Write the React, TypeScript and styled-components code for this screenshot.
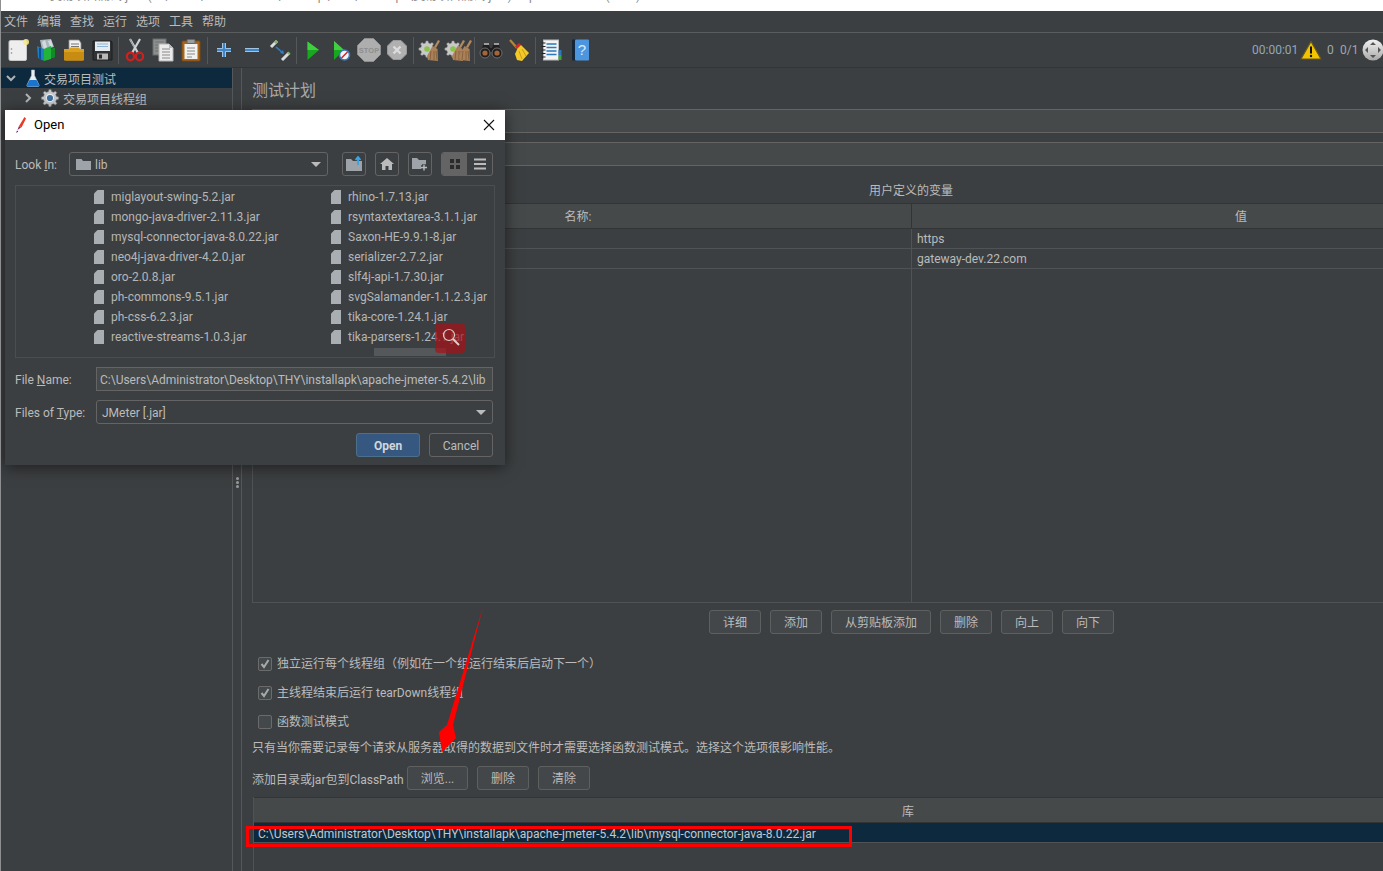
import React from "react";
import styled, { createGlobalStyle } from "styled-components";

const Global = createGlobalStyle`
  html, body { margin: 0; padding: 0; width: 100%; height: 100%; overflow: hidden; background: #3c3f41; }
  #root { height: 100%; }
  * { box-sizing: border-box; }
`;

const FONT = `Roboto, "Noto Sans CJK SC", sans-serif`;

const Page = styled.div`
  position: relative;
  width: 1383px;
  height: 871px;
  overflow: hidden;
  background: #3c3f41;
  color: #bbbbbb;
  font: 12px/16px ${FONT};
  display: flex;
  flex-direction: column;
  border-left: 1px solid #8d8f90;
`;

const TitleStrip = styled.div`
  flex: 0 0 11px;
  height: 11px;
  margin-left: -1px;
  padding-left: 50px;
  background: #ffffff;
  color: #8a8a8a;
  overflow: hidden;
  white-space: nowrap;
  font-size: 12px;
  line-height: 1px;
`;

const TitleClip = styled.div`
  margin-top: -4px;
`;

const MenuBar = styled.div`
  flex: 0 0 22px;
  display: flex;
  align-items: center;
  gap: 9px;
  padding-left: 3px;
  border-bottom: 1px solid #5a5c5d;
`;

const MenuItem = styled.span`
  width: 24px;
  white-space: nowrap;
  line-height: 20px;
`;

const Toolbar = styled.div`
  flex: 0 0 35px;
  display: flex;
  align-items: center;
  padding-left: 3px;
  border-bottom: 1px solid #323436;
`;

const ToolButton = styled.div`
  flex: 0 0 28px;
  height: 28px;
  display: flex;
  align-items: center;
  justify-content: center;
`;

const ToolSep = styled.div`
  flex: 0 0 5px;
  height: 27px;
  display: flex;
  justify-content: center;
  &::before { content: ""; width: 1px; background: #55585a; }
`;

const Status = styled.div`
  margin-left: auto;
  margin-right: -1px;
  display: flex;
  align-items: center;
  color: #a0a8ae;
`;

const Timer = styled.span`
  color: #8fa7bd;
  width: 48px;
`;

const Count = styled.span<{ $w: number; $ml: number }>`
  width: ${(p) => p.$w}px;
  margin-left: ${(p) => p.$ml}px;
`;

const Workspace = styled.div`
  flex: 1;
  display: flex;
  min-height: 0;
`;

const TreePane = styled.div`
  flex: 0 0 231px;
  display: flex;
  flex-direction: column;
`;

const TreeRow = styled.div<{ $selected?: boolean; $indent: number }>`
  height: 20px;
  display: flex;
  align-items: center;
  padding-left: ${(p) => p.$indent}px;
  background: ${(p) => (p.$selected ? "#0d293e" : "transparent")};
  white-space: nowrap;
`;

const TreeLabel = styled.span<{ $ml: number }>`
  margin-left: ${(p) => p.$ml}px;
  padding-top: 3px;
`;

const TreeGap = styled.span<{ $w: number }>`
  width: ${(p) => p.$w}px;
  flex: none;
`;

const Splitter = styled.div`
  flex: 0 0 10px;
  display: flex;
  flex-direction: column;
  align-items: center;
  gap: 1px;
  padding-top: 409px;
  border-left: 1px solid #55585a;
  border-right: 1px solid #55585a;
`;

const GripDot = styled.i`
  width: 3px;
  height: 3px;
  border-radius: 50%;
  background: #9a9a9a;
`;

const MainPane = styled.div`
  flex: 0 0 1328px;
  padding-left: 10px;
  display: flex;
  flex-direction: column;
`;

const Heading = styled.div`
  height: 41px;
  padding-top: 4px;
  display: flex;
  align-items: center;
  font-size: 16px;
  color: #a9a9a9;
`;

const Field = styled.div`
  height: 24px;
  margin-bottom: 9px;
  background: #45494a;
  border-top: 1px solid #646464;
  border-bottom: 1px solid #646464;
`;

const Caption = styled.div`
  height: 28px;
  padding-top: 6px;
  line-height: 20px;
  text-align: center;
`;

const VarTable = styled.div`
  height: 400px;
  border-left: 1px solid #505355;
  border-bottom: 1px solid #505355;
  border-top: 1px solid #323436;
  background: linear-gradient(#505355, #505355) 658px 0 / 1px 100% no-repeat;
`;

const HeaderRow = styled.div`
  height: 25px;
  display: grid;
  grid-template-columns: 658px 1fr;
  background: #45494a;
  border-bottom: 1px solid #323436;
`;

const HeaderCell = styled.div<{ $div?: boolean }>`
  display: flex;
  align-items: center;
  justify-content: center;
  padding: 2px ${(p) => (p.$div ? 0 : 8)}px 0 0;
  border-left: ${(p) => (p.$div ? "1px solid #323436" : "none")};
`;

const DataRow = styled.div`
  height: 20px;
  display: grid;
  grid-template-columns: 658px 1fr;
  border-bottom: 1px solid #505355;
`;

const DataCell = styled.div`
  padding: 1px 0 0 6px;
  line-height: 18px;
  white-space: nowrap;
`;

const TableButtons = styled.div`
  display: flex;
  justify-content: center;
  gap: 9px;
  margin-top: 7px;
  height: 39px;
  padding-left: 1px;
`;

const Btn = styled.div<{ $w: number }>`
  width: ${(p) => p.$w}px;
  height: 24px;
  flex: none;
  padding-top: 2px;
  display: flex;
  align-items: center;
  justify-content: center;
  background: #43474a;
  border: 1px solid #5e6060;
  border-radius: 3px;
  white-space: nowrap;
`;

const CheckRow = styled.div`
  height: 29px;
  display: flex;
  align-items: center;
  gap: 5px;
  padding-left: 6px;
`;

const Check = styled.span`
  width: 14px;
  height: 14px;
  flex: none;
  display: flex;
  align-items: center;
  justify-content: center;
  background: #43494a;
  border: 1px solid #6b6b6b;
  border-radius: 2px;
`;

const Note = styled.div`
  height: 24px;
  line-height: 24px;
  white-space: nowrap;
`;

const PathBar = styled.div`
  display: flex;
  align-items: center;
  height: 24px;
  margin-top: 6px;
`;

const PathLabel = styled.span`
  width: 155px;
  padding-top: 4px;
  white-space: nowrap;
`;

const PathButtons = styled.div`
  display: flex;
  gap: 9px;
`;

const LibTable = styled.div`
  flex: 1;
  margin: 7px 0 0 1px;
  border-left: 1px solid #505355;
  display: flex;
  flex-direction: column;
`;

const LibHeader = styled.div`
  height: 26px;
  padding: 4px 8px 0 0;
  background: #45494a;
  border-top: 1px solid #323436;
  border-bottom: 1px solid #323436;
  display: flex;
  align-items: center;
  justify-content: center;
`;

const LibRow = styled.div`
  height: 20px;
  padding: 2px 0 0 4px;
  line-height: 18px;
  background: #0d293e;
  border-bottom: 1px solid #505355;
  color: #c3c8cc;
  white-space: nowrap;
`;

const RedBox = styled.div`
  position: absolute;
  left: 245px;
  top: 826px;
  width: 606px;
  height: 21px;
  border: 3px solid #ff0000;
  pointer-events: none;
`;

const ArrowLayer = styled.svg`
  position: absolute;
  left: 430px;
  top: 600px;
  pointer-events: none;
`;

/* ---------- dialog ---------- */

const Dialog = styled.div`
  position: absolute;
  left: 4px;
  top: 110px;
  width: 500px;
  height: 355px;
  background: #3c3f41;
  box-shadow: 0 2px 14px rgba(0, 0, 0, 0.55);
  display: flex;
  flex-direction: column;
`;

const DialogTitle = styled.div`
  flex: 0 0 30px;
  background: #ffffff;
  color: #000000;
  font-size: 13px;
  display: flex;
  align-items: center;
  padding: 0 10px 1px 10px;
`;

const TitleText = styled.span`
  margin-left: 7px;
  flex: 1;
`;

const DialogBody = styled.div`
  flex: 1;
  padding: 12px 12px 0 10px;
  display: flex;
  flex-direction: column;
`;

const FormRow = styled.div<{ $mt?: number }>`
  display: flex;
  align-items: center;
  height: 24px;
  margin-top: ${(p) => p.$mt ?? 0}px;
`;

const LookLabel = styled.span`
  width: 54px;
  flex: none;
  padding-top: 1px;
`;

const FormLabel = styled.span`
  width: 81px;
  flex: none;
  padding-top: 1px;
  white-space: nowrap;
`;

const Combo = styled.div<{ $w?: number; $pl?: number }>`
  height: 24px;
  flex: ${(p) => (p.$w ? `0 0 ${p.$w}px` : "1")};
  display: flex;
  align-items: center;
  padding: 0 6px 0 ${(p) => p.$pl ?? 6}px;
  background: #3c3f41;
  border: 1px solid #646464;
  border-radius: 3px;
  white-space: nowrap;
`;

const ComboText = styled.span<{ $ml?: number }>`
  flex: 1;
  margin-left: ${(p) => p.$ml ?? 0}px;
  padding-top: 1px;
`;

const TextInput = styled.div`
  flex: 1;
  height: 24px;
  padding: 1px 3px 0;
  line-height: 22px;
  background: #45494a;
  border: 1px solid #646464;
  white-space: nowrap;
  overflow: hidden;
`;

const ComboArrow = styled.i`
  width: 0;
  height: 0;
  border-left: 5px solid transparent;
  border-right: 5px solid transparent;
  border-top: 5px solid #bbbbbb;
`;

const IconBtn = styled.div<{ $ml?: number }>`
  flex: 0 0 24px;
  height: 24px;
  margin-left: ${(p) => p.$ml ?? 9}px;
  display: flex;
  align-items: center;
  justify-content: center;
  border: 1px solid #646464;
  border-radius: 3px;
`;

const ViewToggle = styled.div`
  flex: 0 0 52px;
  height: 24px;
  margin-left: 9px;
  display: flex;
  border: 1px solid #646464;
  border-radius: 3px;
  overflow: hidden;
`;

const ViewOption = styled.div<{ $active?: boolean }>`
  flex: 1;
  display: flex;
  align-items: center;
  justify-content: center;
  background: ${(p) => (p.$active ? "#646464" : "transparent")};
`;

const FileList = styled.div`
  position: relative;
  height: 173px;
  width: 480px;
  margin-top: 9px;
  padding: 1px 0 0 78px;
  border: 1px solid #4b4e50;
  display: grid;
  grid-template-columns: 237px 1fr;
  grid-auto-flow: column;
  grid-template-rows: repeat(8, 20px);
`;

const FileItem = styled.div`
  display: flex;
  align-items: center;
  gap: 7px;
  white-space: nowrap;
  color: #b4b6b8;
`;

const Thumb = styled.div`
  position: absolute;
  left: 358px;
  top: 162px;
  width: 72px;
  height: 8px;
  background: #55585a;
`;

const Magnifier = styled.div`
  position: absolute;
  left: 419px;
  top: 137px;
  width: 30px;
  height: 30px;
  border-radius: 4px;
  background: rgba(170, 15, 20, 0.68);
  display: flex;
  align-items: center;
  justify-content: center;
`;

const Footer = styled.div`
  display: flex;
  justify-content: flex-end;
  gap: 9px;
  margin-top: 9px;
`;

const DlgBtn = styled.div<{ $primary?: boolean }>`
  width: 64px;
  height: 24px;
  padding-top: 1px;
  display: flex;
  align-items: center;
  justify-content: center;
  border-radius: 3px;
  background: ${(p) => (p.$primary ? "#365880" : "#3c3f41")};
  border: 1px solid ${(p) => (p.$primary ? "#4c708c" : "#646464")};
  font-weight: ${(p) => (p.$primary ? 700 : 400)};
  color: ${(p) => (p.$primary ? "#cfd6dc" : "#bbbbbb")};
`;

const Mn = styled.span`
  text-decoration: underline;
`;

/* ---------- icons ---------- */

type SvgProps = React.SVGProps<SVGSVGElement>;
const S = ({ children, w = 24, h = 24, ...rest }: SvgProps & { w?: number; h?: number }) => (
  <svg width={w} height={h} viewBox={`0 0 ${w} ${h}`} style={{ flex: "none" }} {...rest}>
    {children}
  </svg>
);

const NewIcon = () => (
  <S>
    <rect x="3" y="2.5" width="17.5" height="20" rx="1.5" fill="#eeeeee" stroke="#c8c8c8" />
    <circle cx="20" cy="4" r="3" fill="#f8e88a" opacity="0.9" />
    <circle cx="5.5" cy="11" r="0.8" fill="#888" />
    <circle cx="5.5" cy="15" r="0.8" fill="#888" />
  </S>
);
const TemplateIcon = () => (
  <S>
    <path d="M6 2l11-1 3 8-12 3z" fill="#a9b6bd" />
    <path d="M8 4l3-2 2 7-3 2zM14 3l3-1 2 6-3 1z" fill="#d4dadd" />
    <path d="M3 8l7 3v12l-6-3z" fill="#1d7fc4" />
    <path d="M5 9.5l2 .8v11l-2-1z" fill="#0b4f8c" />
    <path d="M10 11l7-3v3l4-1v9l-4 1v1l-7 2z" fill="#21b33a" />
    <path d="M17 11l4-1v9l-4 1z" fill="#128a26" />
  </S>
);
const OpenIcon = () => (
  <S>
    <path d="M7 2h10l2 3v9H7z" fill="#f1f1f1" stroke="#8e8e8e" strokeWidth="0.8" />
    <path d="M9 6h8M9 8.5h8" stroke="#777" strokeWidth="1" />
    <path d="M2 11h5l1-1.5h9l1 1.5h4v10a1.5 1.5 0 0 1-1.5 1.5h-17A1.5 1.5 0 0 1 2 21z" fill="#dca21f" />
    <path d="M2 14h20v7a1.5 1.5 0 0 1-1.5 1.5h-17A1.5 1.5 0 0 1 2 21z" fill="#c98c13" />
  </S>
);
const SaveIcon = () => (
  <S>
    <path d="M3 3h18l1 1v18H3z" fill="#303234" stroke="#1c1c1c" />
    <rect x="5" y="3.5" width="15" height="9.5" fill="#e4ecf2" />
    <path d="M7 6h11M7 8.5h11" stroke="#8fb5d6" strokeWidth="1.2" />
    <rect x="7" y="15.5" width="11" height="6" fill="#b9b9b9" />
    <rect x="9" y="16.5" width="3" height="4" fill="#2b2b2b" />
  </S>
);
const CutIcon = () => (
  <S>
    <path d="M7 1l8 14M17 1L9 15" stroke="#d0d3d6" strokeWidth="2.2" />
    <path d="M7 1l4 8" stroke="#8e9498" strokeWidth="1" />
    <ellipse cx="7.5" cy="18.5" rx="3.6" ry="3.8" fill="none" stroke="#d11f1f" strokeWidth="2.2" />
    <ellipse cx="16.5" cy="18.5" rx="3.6" ry="3.8" fill="none" stroke="#d11f1f" strokeWidth="2.2" />
  </S>
);
const CopyIcon = () => (
  <S>
    <rect x="2" y="1" width="13" height="16" fill="#8c8f90" stroke="#6b6d6e" />
    <path d="M4 4h9M4 7h9M4 10h9M4 13h9" stroke="#707375" />
    <path d="M8 6h10l4 4v13H8z" fill="#ececec" stroke="#b5b5b5" />
    <path d="M18 6v4h4z" fill="#bbb" />
    <path d="M11 11h8M11 14h8M11 17h8M11 20h8" stroke="#8a8a8a" />
  </S>
);
const PasteIcon = () => (
  <S>
    <rect x="3" y="3" width="18" height="20" rx="1" fill="#a9661a" stroke="#7c4a10" />
    <rect x="5.5" y="6" width="13" height="15" fill="#f1f1f1" />
    <rect x="8" y="1.5" width="8" height="4" rx="1" fill="#9a9da0" stroke="#666" />
    <path d="M8 10h8M8 13h8M8 16h8M8 19h5" stroke="#8a8a8a" />
  </S>
);
const PlusIcon = () => (
  <S>
    <path d="M12 5v14M5 12h14" stroke="#bcd4ea" strokeWidth="4" />
    <path d="M12 5v14M5 12h14" stroke="#3f86c9" strokeWidth="2.4" />
  </S>
);
const MinusIcon = () => (
  <S>
    <path d="M5 12h14" stroke="#bcd4ea" strokeWidth="4" />
    <path d="M5 12h14" stroke="#3f86c9" strokeWidth="2.4" />
  </S>
);
const ToggleIcon = () => (
  <S>
    <path d="M3 9l6-6" stroke="#d8dcdc" strokeWidth="3" />
    <path d="M7 5l2-2" stroke="#7fb56a" strokeWidth="3" />
    <path d="M21 15l-7 7" stroke="#d8dcdc" strokeWidth="3" />
    <path d="M20 16l1.5-1.5" stroke="#7fb56a" strokeWidth="3" />
    <path d="M8 9l7 6" stroke="#2f7fc4" strokeWidth="1.6" />
    <path d="M16 16l-1-4-3 3z" fill="#2f7fc4" />
  </S>
);
const RunIcon = () => (
  <S>
    <path d="M6.5 3.5L18 12 6.5 22z" fill="#17a81f" />
    <path d="M6.5 3.5L18 12H6.5z" fill="#3fcf3f" />
  </S>
);
const RunNoPauseIcon = () => (
  <S>
    <path d="M5 3l10 9-10 10z" fill="#17a81f" />
    <path d="M5 3l10 9H5z" fill="#3fcf3f" />
    <circle cx="15.5" cy="17" r="5" fill="#f2f5f8" stroke="#3b77b5" strokeWidth="1.6" />
    <path d="M12.5 20l6-6" stroke="#d21f1f" strokeWidth="1.4" />
  </S>
);
const StopIcon = () => (
  <S>
    <path d="M7.5 0.5h9l7 7v9l-7 7h-9l-7-7v-9z" fill="#aeaeae" stroke="#8e8e8e" />
    <text x="12" y="14.5" textAnchor="middle" fontFamily="Liberation Sans, sans-serif" fontSize="7.5" fontWeight="700" fill="#8f8f8f">
      STOP
    </text>
  </S>
);
const ShutIcon = () => (
  <S>
    <path d="M8 2.5h8l5.5 5.5v8L16 21.5H8L2.5 16V8z" fill="#b0b0b0" stroke="#999" />
    <path d="M8.5 8.5l7 7M15.5 8.5l-7 7" stroke="#dcdcdc" strokeWidth="2.4" />
  </S>
);
const Gear = ({ x, y }: { x: number; y: number }) => (
  <g transform={`translate(${x} ${y})`}>
    <path d="M7 0h2l.5 2 1.8.7 1.8-1.1 1.4 1.4-1.1 1.8.7 1.8 2 .5v2l-2 .5-.7 1.8 1.1 1.8-1.4 1.4-1.8-1.1-1.8.7-.5 2H7l-.5-2-1.8-.7-1.8 1.1-1.4-1.4 1.1-1.8-.7-1.8-2-.5v-2l2-.5.7-1.8L1.6 3 3 1.6l1.8 1.1 1.8-.7z" fill="#c8c8c8" stroke="#8c8c8c" strokeWidth="0.5" />
    <circle cx="8" cy="8" r="2.8" fill="#8bc34a" />
  </g>
);
const Broomlet = ({ dx = 0 }: { dx?: number }) => (
  <g transform={`translate(${dx} 0)`}>
    <path d="M20 2l2 1-4 7-2-1z" fill="#b08a63" />
    <path d="M14.5 8l5 3 .5 12-10-1-1-4z" fill="#ab8159" />
    <path d="M13 13l-1 9M16 13l0 9M18 13l1 9" stroke="#7d5b39" strokeWidth="0.8" />
  </g>
);
const ClearIcon = () => (
  <S>
    <Gear x={1} y={3} />
    <Broomlet />
  </S>
);
const ClearAllIcon = () => (
  <S w={28} h={24}>
    <Gear x={1} y={3} />
    <Broomlet dx={-1} />
    <Broomlet dx={6} />
  </S>
);
const BinocularsIcon = () => (
  <S>
    <path d="M4 7h6l1 3h2l1-3h6l3 10H14l-1-3h-2l-1 3H1z" fill="#1f1f1f" />
    <circle cx="6" cy="15" r="5" fill="#1f1f1f" stroke="#6d6d6d" />
    <circle cx="18" cy="15" r="5" fill="#1f1f1f" stroke="#6d6d6d" />
    <circle cx="6" cy="15" r="2.6" fill="#a5643a" />
    <circle cx="18" cy="15" r="2.6" fill="#a5643a" />
    <path d="M5 6h5M15 6h5" stroke="#bdbdbd" strokeWidth="1.6" />
  </S>
);
const BroomIcon = () => (
  <S>
    <path d="M3 2l7 8" stroke="#b98434" strokeWidth="2.2" />
    <path d="M8 8.5l4-3.5 2 2-3.5 4z" fill="#d52828" />
    <path d="M10.5 10.5L14 7l8 8-7 8-5-1-2-6z" fill="#f3c927" />
    <path d="M12 13l3 8M15 11l4 7" stroke="#c9991a" />
  </S>
);
const LogIcon = () => (
  <S>
    <rect x="3.5" y="2" width="15" height="20" fill="#f3f3f3" stroke="#b9b9b9" />
    <path d="M6.5 6h10M6.5 9.5h10M6.5 13h10M6.5 16.5h10" stroke="#2a78bf" strokeWidth="1.4" />
    <path d="M1.5 5h4M1.5 8.5h4M1.5 12h4M1.5 15.5h4M1.5 19h4" stroke="#222" strokeWidth="1.2" />
    <rect x="18.5" y="12" width="3" height="5" fill="#2a78bf" />
    <rect x="18.5" y="17" width="3" height="5" fill="#3ca33c" />
  </S>
);
const HelpIcon = () => (
  <S>
    <rect x="4" y="1.5" width="5" height="21" rx="1" fill="#14273a" />
    <rect x="7" y="1.5" width="14" height="21" rx="1" fill="#4c96e0" />
    <text x="14" y="17" textAnchor="middle" fontFamily="Liberation Sans, sans-serif" fontSize="15" fill="#dbeaf8">
      ?
    </text>
  </S>
);
const WarnIcon = () => (
  <S w={22} h={20}>
    <path d="M11 1.5L21 19H1z" fill="#f5c400" stroke="#6a5a18" strokeWidth="1.2" strokeLinejoin="round" />
    <path d="M11 6.5v7" stroke="#111" strokeWidth="2" />
    <circle cx="11" cy="16" r="1.2" fill="#111" />
  </S>
);
const LoggerIcon = () => (
  <S w={22} h={22}>
    <defs>
      <linearGradient id="lg" x1="0" y1="0" x2="0" y2="1">
        <stop offset="0" stopColor="#f1f1f1" />
        <stop offset="1" stopColor="#a9a9a9" />
      </linearGradient>
    </defs>
    <circle cx="11" cy="11" r="10.5" fill="url(#lg)" />
    <g fill="#555">
      <path d="M11 3l3 3H8zM11 19l3-3H8zM3 11l3-3v6zM19 11l-3-3v6z" />
    </g>
  </S>
);
const ChevDown = () => (
  <S w={14} h={14}>
    <path d="M3 5l4 4 4-4" fill="none" stroke="#b0b4b6" strokeWidth="2" />
  </S>
);
const ChevRight = () => (
  <S w={14} h={14}>
    <path d="M5 3l4 4-4 4" fill="none" stroke="#b0b4b6" strokeWidth="2" />
  </S>
);
const Flask = () => (
  <S w={14} h={18}>
    <path d="M5.5 1h3v5.5l4.5 9.5a1 1 0 0 1-1 1.5H2a1 1 0 0 1-1-1.5l4.5-9.5z" fill="#e8eef2" stroke="#b8c2c8" strokeWidth="0.6" />
    <path d="M3.5 11h7l2.7 5.2a1 1 0 0 1-1 1.3H1.8a1 1 0 0 1-1-1.3z" fill="#1b74d0" />
  </S>
);
const TreeGear = () => (
  <S w={20} h={20}>
    <g transform="translate(1.5 1.5) scale(1.06)">
      <path d="M7 0h2l.5 2 1.8.7 1.8-1.1 1.4 1.4-1.1 1.8.7 1.8 2 .5v2l-2 .5-.7 1.8 1.1 1.8-1.4 1.4-1.8-1.1-1.8.7-.5 2H7l-.5-2-1.8-.7-1.8 1.1-1.4-1.4 1.1-1.8-.7-1.8-2-.5v-2l2-.5.7-1.8L1.6 3 3 1.6l1.8 1.1 1.8-.7z" fill="#c6cacc" stroke="#76797b" strokeWidth="0.5" />
      <circle cx="8" cy="8" r="3.4" fill="#3f6f9e" stroke="#e8eef2" />
    </g>
  </S>
);
const Pencil = () => (
  <S w={12} h={18}>
    <path d="M9.5 1L4 10l2.5 1.5L11 2.5z" fill="#ea3a24" />
    <path d="M4 10l-1.5 4 3.5-2.5z" fill="#8c1c66" />
    <path d="M2 14.5l-.8 2.5 2-1.5z" fill="#3c1a70" />
  </S>
);
const CloseX = () => (
  <S w={12} h={12}>
    <path d="M1 1l10 10M11 1L1 11" stroke="#111" strokeWidth="1.1" />
  </S>
);
const Folder = () => (
  <S w={15} h={12}>
    <path d="M0 1h5.5l1.5 2h8v9H0z" fill="#9da3a8" />
  </S>
);
const FolderUp = () => (
  <S w={18} h={16}>
    <path d="M1 3h5l2 2h9v10H1z" fill="#9da3a8" />
    <path d="M13 9V2M10.5 4L13 1l2.5 3" fill="none" stroke="#3ba5e8" strokeWidth="1.8" />
  </S>
);
const Home = () => (
  <S w={14} h={12}>
    <path d="M7 0L0 6h2v6h3.5V8h3v4H12V6h2z" fill="#bbbbbb" />
  </S>
);
const FolderNew = () => (
  <S w={16} h={14}>
    <path d="M0 1h5l2 2h7v9H0z" fill="#9da3a8" />
    <path d="M12 7v6M9 10h6" stroke="#3c3f41" strokeWidth="3.4" />
    <path d="M12 7.5v6M9 10.5h6" stroke="#bbbbbb" strokeWidth="1.4" />
  </S>
);
const GridGlyph = () => (
  <S w={12} h={12}>
    <path d="M1 1h4v4H1zM7 1h4v4H7zM1 7h4v4H1zM7 7h4v4H7z" fill="#2b2b2b" />
  </S>
);
const ListGlyph = () => (
  <S w={12} h={12}>
    <path d="M0 1.5h12M0 6h12M0 10.5h12" stroke="#bbbbbb" strokeWidth="1.8" />
  </S>
);
const FileGlyph = () => (
  <S w={10} h={14}>
    <path d="M3.5 0H10v14H0V3.5z" fill="#a9aeb2" />
  </S>
);
const Tick = () => (
  <S w={12} h={12}>
    <path d="M2.5 6l2.5 3 4.5-7" fill="none" stroke="#a9a9a9" strokeWidth="2" />
  </S>
);
const Lens = () => (
  <S w={20} h={20}>
    <circle cx="9" cy="7" r="5.5" fill="none" stroke="#d8cfcf" strokeWidth="1.2" />
    <path d="M13 11l6 6" stroke="#d8cfcf" strokeWidth="2" />
  </S>
);

/* ---------- data ---------- */

const MENUS = ["文件", "编辑", "查找", "运行", "选项", "工具", "帮助"];

const TOOL_GROUPS: React.FC[][] = [
  [NewIcon, TemplateIcon, OpenIcon, SaveIcon],
  [CutIcon, CopyIcon, PasteIcon],
  [PlusIcon, MinusIcon, ToggleIcon],
  [RunIcon, RunNoPauseIcon, StopIcon, ShutIcon],
  [ClearIcon, ClearAllIcon],
  [BinocularsIcon, BroomIcon],
  [LogIcon, HelpIcon],
];

const FILES = [
  "miglayout-swing-5.2.jar",
  "mongo-java-driver-2.11.3.jar",
  "mysql-connector-java-8.0.22.jar",
  "neo4j-java-driver-4.2.0.jar",
  "oro-2.0.8.jar",
  "ph-commons-9.5.1.jar",
  "ph-css-6.2.3.jar",
  "reactive-streams-1.0.3.jar",
  "rhino-1.7.13.jar",
  "rsyntaxtextarea-3.1.1.jar",
  "Saxon-HE-9.9.1-8.jar",
  "serializer-2.7.2.jar",
  "slf4j-api-1.7.30.jar",
  "svgSalamander-1.1.2.3.jar",
  "tika-core-1.24.1.jar",
  "tika-parsers-1.24.1.jar",
];

const TABLE_BTNS: [string, number][] = [
  ["详细", 52],
  ["添加", 52],
  ["从剪贴板添加", 100],
  ["删除", 52],
  ["向上", 52],
  ["向下", 52],
];

const CHECKS: [string, boolean][] = [
  ["独立运行每个线程组（例如在一个组运行结束后启动下一个）", true],
  ["主线程结束后运行 tearDown线程组", true],
  ["函数测试模式", false],
];

export default function App() {
  return (
    <Page>
      <Global />
      <TitleStrip>
        <TitleClip>交易项目测试.jmx (C:\Users\Administrator\Desktop\THY\installapk\交易项目测试.jmx) - Apache JMeter (5.4.2)</TitleClip>
      </TitleStrip>
      <MenuBar>
        {MENUS.map((m) => (
          <MenuItem key={m}>{m}</MenuItem>
        ))}
      </MenuBar>
      <Toolbar>
        {TOOL_GROUPS.map((group, i) => (
          <React.Fragment key={i}>
            {i > 0 && <ToolSep />}
            {group.map((Icon, j) => (
              <ToolButton key={j}>
                <Icon />
              </ToolButton>
            ))}
          </React.Fragment>
        ))}
        <Status>
          <Timer>00:00:01</Timer>
          <WarnIcon />
          <Count $w={6} $ml={5}>0</Count>
          <Count $w={22} $ml={7}>0/1</Count>
          <LoggerIcon />
        </Status>
      </Toolbar>
      <Workspace>
        <TreePane>
          <TreeRow $selected $indent={3}>
            <ChevDown />
            <TreeGap $w={8} />
            <Flask />
            <TreeLabel $ml={4}>交易项目测试</TreeLabel>
          </TreeRow>
          <TreeRow $indent={20}>
            <ChevRight />
            <TreeGap $w={5} />
            <TreeGear />
            <TreeLabel $ml={3}>交易项目线程组</TreeLabel>
          </TreeRow>
        </TreePane>
        <Splitter>
          <GripDot />
          <GripDot />
          <GripDot />
        </Splitter>
        <MainPane>
          <Heading>测试计划</Heading>
          <Field />
          <Field />
          <Caption>用户定义的变量</Caption>
          <VarTable>
            <HeaderRow>
              <HeaderCell>名称:</HeaderCell>
              <HeaderCell $div>值</HeaderCell>
            </HeaderRow>
            <DataRow>
              <div />
              <DataCell>https</DataCell>
            </DataRow>
            <DataRow>
              <div />
              <DataCell>gateway-dev.22.com</DataCell>
            </DataRow>
          </VarTable>
          <TableButtons>
            {TABLE_BTNS.map(([label, w]) => (
              <Btn key={label} $w={w}>
                {label}
              </Btn>
            ))}
          </TableButtons>
          {CHECKS.map(([label, checked]) => (
            <CheckRow key={label}>
              <Check>{checked && <Tick />}</Check>
              {label}
            </CheckRow>
          ))}
          <Note>只有当你需要记录每个请求从服务器取得的数据到文件时才需要选择函数测试模式。选择这个选项很影响性能。</Note>
          <PathBar>
            <PathLabel>添加目录或jar包到ClassPath</PathLabel>
            <PathButtons>
              <Btn $w={61}>浏览...</Btn>
              <Btn $w={52}>删除</Btn>
              <Btn $w={52}>清除</Btn>
            </PathButtons>
          </PathBar>
          <LibTable>
            <LibHeader>库</LibHeader>
            <LibRow>C:\Users\Administrator\Desktop\THY\installapk\apache-jmeter-5.4.2\lib\mysql-connector-java-8.0.22.jar</LibRow>
          </LibTable>
        </MainPane>
      </Workspace>

      <RedBox />
      <ArrowLayer width="60" height="160" viewBox="430 600 60 160">
        <path d="M482 607L452 725 455 738 441 752 438 732 446 725z" fill="#ff0000" />
      </ArrowLayer>

      <Dialog>
        <DialogTitle>
          <Pencil />
          <TitleText>Open</TitleText>
          <CloseX />
        </DialogTitle>
        <DialogBody>
          <FormRow>
            <LookLabel>
              Look <Mn>I</Mn>n:
            </LookLabel>
            <Combo $w={259}>
              <Folder />
              <ComboText $ml={4}>lib</ComboText>
              <ComboArrow />
            </Combo>
            <IconBtn $ml={14}>
              <FolderUp />
            </IconBtn>
            <IconBtn>
              <Home />
            </IconBtn>
            <IconBtn>
              <FolderNew />
            </IconBtn>
            <ViewToggle>
              <ViewOption $active>
                <GridGlyph />
              </ViewOption>
              <ViewOption>
                <ListGlyph />
              </ViewOption>
            </ViewToggle>
          </FormRow>
          <FileList>
            {FILES.map((f) => (
              <FileItem key={f}>
                <FileGlyph />
                {f}
              </FileItem>
            ))}
            <Thumb />
            <Magnifier>
              <Lens />
            </Magnifier>
          </FileList>
          <FormRow $mt={9}>
            <FormLabel>
              File <Mn>N</Mn>ame:
            </FormLabel>
            <TextInput>C:\Users\Administrator\Desktop\THY\installapk\apache-jmeter-5.4.2\lib</TextInput>
          </FormRow>
          <FormRow $mt={9}>
            <FormLabel>
              Files of <Mn>T</Mn>ype:
            </FormLabel>
            <Combo $pl={5}>
              <ComboText>JMeter [.jar]</ComboText>
              <ComboArrow />
            </Combo>
          </FormRow>
          <Footer>
            <DlgBtn $primary>Open</DlgBtn>
            <DlgBtn>Cancel</DlgBtn>
          </Footer>
        </DialogBody>
      </Dialog>
    </Page>
  );
}
